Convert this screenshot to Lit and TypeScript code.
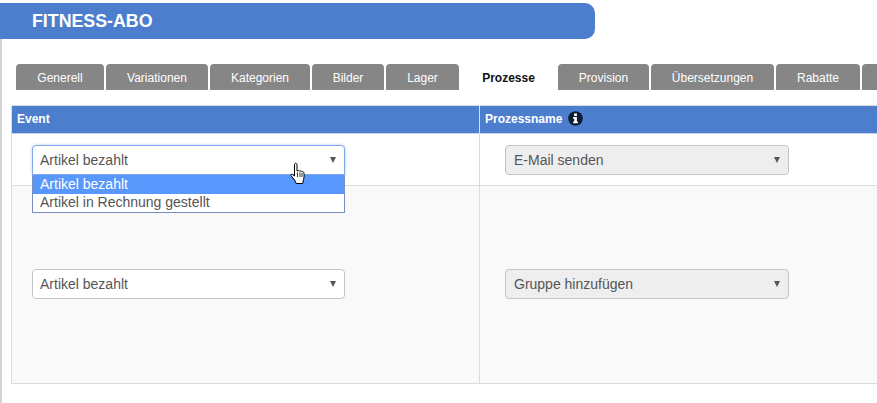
import { LitElement, html, css } from 'lit';
import { customElement } from 'lit/decorators.js';

const tabs = [
  { label: 'Generell', width: 88 },
  { label: 'Variationen', width: 102 },
  { label: 'Kategorien', width: 100 },
  { label: 'Bilder', width: 72 },
  { label: 'Lager', width: 73 },
  { label: 'Prozesse', width: 95, active: true },
  { label: 'Provision', width: 91 },
  { label: 'Übersetzungen', width: 123 },
  { label: 'Rabatte', width: 84 },
  { label: '', width: 40 },
];

@customElement('app-root')
export class AppRoot extends LitElement {
  static styles = css`
    :host {
      display: block;
      font-family: 'Liberation Sans', Arial, sans-serif;
    }
    .page {
      position: relative;
      width: 877px;
      height: 403px;
      overflow: hidden;
      background: #fff;
      box-sizing: border-box;
      padding-top: 3px;
    }
    .page::before {
      content: '';
      position: absolute;
      left: 0;
      top: 39px;
      bottom: 0;
      width: 2px;
      background: #d4d4d4;
    }
    .title {
      width: 595px;
      height: 36px;
      box-sizing: border-box;
      padding-left: 32px;
      background: #4c7ecd;
      border-radius: 0 10px 10px 0;
      color: #fff;
      font-size: 17.8px;
      font-weight: bold;
      line-height: 36px;
    }
    .tabs {
      display: flex;
      gap: 2px;
      width: 900px;
      margin: 25px 0 0 16px;
    }
    .tab {
      flex: none;
      height: 26px;
      border-radius: 4px 4px 0 0;
      background: #868686;
      color: #fff;
      font-size: 12px;
      line-height: 28px;
      text-align: center;
    }
    .tab.active {
      background: #fff;
      color: #111;
      font-weight: bold;
    }
    .table {
      position: relative;
      display: grid;
      grid-template-columns: 467px 420px;
      grid-template-rows: 28px 52px 197px;
      width: 888px;
      margin: 15px 0 0 11px;
      border: solid #dcdcdc;
      border-width: 1px 0 1px 1px;
      box-sizing: content-box;
    }
    .head {
      box-sizing: border-box;
      display: flex;
      align-items: center;
      gap: 6px;
      padding-left: 5px;
      padding-bottom: 2px;
      background: #4c7ecd;
      color: #fff;
      font-size: 12px;
      font-weight: bold;
      border-bottom: 1px solid #c8d6ec;
    }
    .cell {
      box-sizing: border-box;
      display: flex;
      align-items: center;
      padding-left: 20px;
      border-bottom: 1px solid #dcdcdc;
    }
    .cell.top {
      align-items: flex-start;
      padding-top: 11px;
    }
    .cell.alt {
      background: #f9f9f9;
      border-bottom: 0;
      padding-bottom: 2px;
    }
    .second {
      border-left: 1px solid #dcdcdc;
      padding-left: 25px;
    }
    .head.second {
      border-left-color: #d5e0f2;
      padding-left: 5px;
    }
    .select {
      position: relative;
      box-sizing: border-box;
      width: 313px;
      height: 30px;
      padding-left: 7px;
      border: 1px solid #c4c4c4;
      border-radius: 4px;
      background: #fff;
      color: #555;
      font-size: 14px;
      line-height: 28px;
    }
    .select.open {
      border-color: #7da7e8;
      border-radius: 4px 4px 0 0;
      box-shadow: 0 0 3px rgba(102, 150, 233, 0.5);
    }
    .select.disabled {
      width: 284px;
      padding-left: 8px;
      background: #eee;
    }
    .select::after {
      content: '';
      position: absolute;
      right: 8px;
      top: 11px;
      border: solid transparent;
      border-width: 6px 3px 0;
      border-top-color: #555;
    }
    .options {
      position: absolute;
      left: -1px;
      top: 29px;
      z-index: 1;
      width: 313px;
      box-sizing: border-box;
      border: 1px solid #7a8fc0;
      border-top: 0;
      background: #fff;
      line-height: 18px;
    }
    .option {
      height: 18px;
      padding-left: 7px;
    }
    .option.hover {
      height: 19px;
      background: #5897fb;
      color: #fff;
    }
    .option.hover + .option {
      line-height: 16px;
    }
    .pointer {
      position: absolute;
      left: 290px;
      top: 162px;
      z-index: 2;
    }
  `;

  render() {
    return html`
      <div class="page">
        <div class="title">FITNESS-ABO</div>
        <div class="tabs">
          ${tabs.map(
            (t) => html`<div class="tab ${t.active ? 'active' : ''}" style="width:${t.width}px">${t.label}</div>`
          )}
        </div>
        <div class="table">
          <div class="head">Event</div>
          <div class="head second">
            Prozessname
            <svg width="15" height="15" viewBox="0 0 14 14">
              <circle cx="7" cy="7" r="6.8" fill="#0c1c33" />
              <rect x="5.7" y="2.300" width="2.600" height="2.400" fill="#fff" />
              <path d="M4.800 5.700h3.500v4.200h1v1.500H4.800V9.900h1V7.200h-1z" fill="#fff" />
            </svg>
          </div>
          <div class="cell top">
            <div class="select open">
              Artikel bezahlt
              <div class="options">
                <div class="option hover">Artikel bezahlt</div>
                <div class="option">Artikel in Rechnung gestellt</div>
              </div>
            </div>
          </div>
          <div class="cell top second"><div class="select disabled">E-Mail senden</div></div>
          <div class="cell alt"><div class="select">Artikel bezahlt</div></div>
          <div class="cell alt second"><div class="select disabled">Gruppe hinzufügen</div></div>
        </div>
        <svg class="pointer" width="18" height="25" viewBox="0 0 18 25">
          <path
            d="M4.500 2.500c0-1.600 2.500-1.600 2.500 0V9l.6-.2c.8-.5 1.800-.3 2 .4.700-.5 1.800-.3 2 .5.800-.4 2-.1 2.200.9.500 2 .4 5-.3 7l-.8 3.900H6.200L4.600 18 1.300 14c-.7-1-.2-2 .8-1.800L4.500 14z"
            fill="#fff"
            stroke="#000"
            stroke-width="1"
            stroke-linejoin="round"
          />
          <path d="M7.500 10.500V15M10 10.500V15M12 11V15" stroke="#000" stroke-width="0.8" fill="none" />
        </svg>
      </div>
    `;
  }
}
